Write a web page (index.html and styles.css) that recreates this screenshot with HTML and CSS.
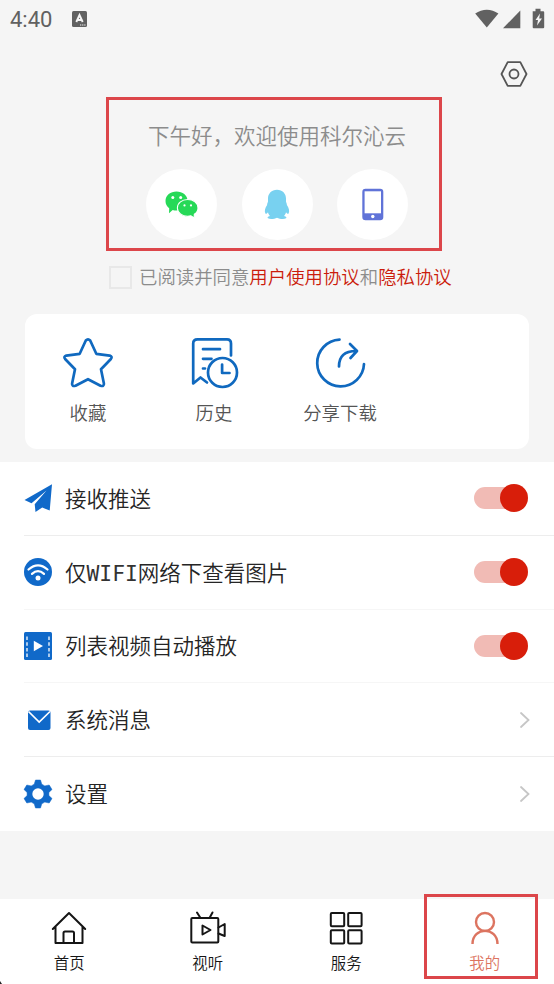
FILE: index.html
```html
<!DOCTYPE html>
<html lang="zh-CN">
<head>
<meta charset="utf-8">
<title>我的</title>
<link rel="stylesheet" href="styles.css">
</head>
<body>
<div class="screen">
  <header class="status">
    <span class="time">4:40</span>
    <svg class="ime" width="15" height="16" viewBox="0 0 15 16"><rect width="15" height="16" rx="1.5" fill="#616161"/><path d="M4.300 11 7.500 4 10.700 11M5.500 9h4" fill="none" stroke="#f5f5f5" stroke-width="1.9"/><path d="M8 14h5.500" stroke="#f5f5f5" stroke-width="1.200" stroke-dasharray="1.300 .8"/></svg>
    <svg class="signals" width="70" height="21" viewBox="0 0 70 21" fill="#616161"><path d="M.2 4.500C7.300-.6 16.300-.6 23.400 4.500L11.800 18.600Z"/><path d="M28 19.300 45.300 1.500V19.300Z"/><path d="M58 2.200h2.500V-.2h5v2.400h2.700q1 0 1 1v15.100q0 1-1 1H58.700q-1 0-1-1V2.200Z"/><path d="M65 4.500 60.500 11H63L62 16.500 67 9.500H64.200Z" fill="#f5f5f5"/></svg>
  </header>
  <div class="tools">
    <svg width="28" height="26" viewBox="0 0 28 26" fill="none" stroke="#555" stroke-width="1.8" stroke-linejoin="round"><path d="M7.700 1.200H20.300L26.500 13 20.300 24.800H7.700L1.500 13Z"/><circle cx="14" cy="13" r="4.500"/></svg>
  </div>
  <section class="login">
    <p class="greeting">下午好，欢迎使用科尔沁云</p>
    <div class="providers">
      <span class="provider"><svg width="34" height="28" viewBox="0 0 34 28"><path d="M11.500.5C17.500.5 22.600 4.300 22.600 10S17.500 19.500 11.500 19.500Q9.500 19.500 7.700 19L4 22.300 4.200 17.200C1.800 15.500.5 13 .5 10 .5 4.300 5.500.5 11.500.5Z" fill="#26d957"/><path d="M22.600 8.500c5.700 0 10.400 3.500 10.400 8.400 0 2.700-1.500 4.900-3.700 6.300L29.200 27l-3.300-2.200q-1.600.4-3.300.4c-5.500 0-10.200-3.500-10.200-8.300s4.600-8.400 10.200-8.400Z" fill="#26d957" stroke="#fff" stroke-width="1.100"/><g fill="#fff"><circle cx="7.800" cy="6.500" r="1.500"/><circle cx="15.700" cy="6.500" r="1.500"/><circle cx="19.500" cy="14.400" r="1.100"/><circle cx="26" cy="14.400" r="1.100"/></g></svg></span>
      <span class="provider"><svg width="26" height="31" viewBox="0 0 26 31"><path d="M13 .8C18.500.8 22 4.800 22 9.500V12.500C22.300 14 23 14.800 22.900 16 25 19 25.700 22 24.700 24.300 24 25.500 22.700 24.300 22 23.200 21.700 24.800 20.900 26 20 26.900 22.500 27.600 23 28.500 22 29.300 20 30.700 15.500 30 13 28.700 10.500 30 6 30.700 4 29.300 3 28.500 3.500 27.600 6 26.900 5.100 26 4.300 24.800 4 23.200 3.300 24.300 2 25.500 1.300 24.300.3 22 1 19 3.100 16 3 14.800 3.700 14 4 12.500V9.500C4 4.800 7.500.8 13 .8Z" fill="#78d1f0"/></svg></span>
      <span class="provider"><svg width="22" height="33" viewBox="0 0 22 33"><rect x=".3" y=".8" width="21" height="31.500" rx="3.200" fill="#6073d8"/><rect x="2.600" y="3.300" width="16.400" height="22" fill="#fff"/><circle cx="10.800" cy="28.500" r="1.700" fill="#fff"/></svg></span>
    </div>
  </section>
  <div class="agreement"><i class="checkbox"></i><span>已阅读并同意<b>用户使用协议</b>和<b>隐私协议</b></span></div>
  <section class="card">
    <div class="shortcut"><svg width="50" height="50" viewBox="0 0 50 50"><path d="M22.800 2.500Q25 .2 27.200 2.500L33.300 15.800 46.700 17.600Q49.800 18.700 47.900 21L38 31.200 40.900 45.400Q41.300 48.900 37.500 47.700L25 41.200 12.500 47.700Q8.700 48.900 9.100 45.400L12 31.200 2.100 21Q.2 18.700 3.300 17.600L16.700 15.800Z"/></svg><span>收藏</span></div>
    <div class="shortcut"><svg width="50" height="50" viewBox="0 0 50 50"><path d="M42 17.500V5.500Q42 1.300 38 1.300H8.500Q4.200 1.300 4.200 5.500V45.500L11.500 39.500 18 44.500M14 11.200H31M14 20.800H22.500M14 30.500H16"/><circle cx="33.500" cy="34.500" r="14.500"/><path d="M33.100 26.500V35H40.500"/></svg><span>历史</span></div>
    <div class="shortcut"><svg width="50" height="50" viewBox="0 0 50 50"><path d="M24.500 1.600A23.400 23.400 0 1 0 49 26M24 28.500C24 18.500 29.500 13 41 13M35 6 42 13 35.500 20"/></svg><span>分享下载</span></div>
  </section>
  <section class="list">
    <div class="row"><svg class="icon" width="28" height="28" viewBox="0 0 28 28" fill="#1069c9"><path d="M28 .2 25.700 26.600 18.200 23.500 11.500 28 10.700 20.200 22.500 6.500 7.500 19.200.5 16Z"/></svg><span class="label">接收推送</span><i class="switch"></i></div>
    <div class="row faint"><svg class="icon" width="28" height="28" viewBox="0 0 28 28"><circle cx="14" cy="14" r="14" fill="#1069c9"/><path d="M4.500 11.500Q14 3.200 23.500 11.500M8 15.900Q14 10.300 20 15.900" fill="none" stroke="#fff" stroke-width="2.200" stroke-linecap="round"/><circle cx="14" cy="20" r="2.500" fill="#fff"/></svg><span class="label">仅<span class="latin">WIFI</span>网络下查看图片</span><i class="switch"></i></div>
    <div class="row faint"><svg class="icon" width="28" height="28" viewBox="0 0 28 28"><rect width="28" height="28" rx="1.500" fill="#1069c9"/><path d="M3 4.500V25M25 4.500V25" stroke="#fff" stroke-width="1.300" stroke-dasharray="3.500 2.200"/><path d="M9.800 8.700 19 14 9.800 19.300Z" fill="#fff"/></svg><span class="label">列表视频自动播放</span><i class="switch"></i></div>
    <div class="row"><svg class="icon" width="28" height="28" viewBox="0 0 28 28"><rect x="4" y="4.500" width="22.500" height="19.500" rx="2" fill="#1069c9"/><path d="M4.500 5.500 15.200 16 26 5.500" fill="none" stroke="#fff" stroke-width="1.700"/></svg><span class="label">系统消息</span><svg class="arrow" width="10" height="16" viewBox="0 0 10 16"><path d="M1 1 8.500 8 1 15"/></svg></div>
    <div class="row"><svg class="icon" width="28" height="28" viewBox="0 0 28 28"><path d="M11.500 0H16.500L17.800 4.200 20.800 5.900 25.200 5 28 9.500 24.900 12.400V15.600L28 18.500 25.200 23 20.800 22.100 17.800 23.800 16.500 28H11.500L10.200 23.800 7.200 22.100 2.800 23 0 18.500 3.100 15.600V12.400L0 9.500 2.800 5 7.200 5.900 10.200 4.200Z" fill="#1069c9" stroke="#1069c9" stroke-width=".5" stroke-linejoin="round"/><circle cx="14" cy="14" r="5.700" fill="#fff"/></svg><span class="label">设置</span><svg class="arrow" width="10" height="16" viewBox="0 0 10 16"><path d="M1 1 8.500 8 1 15"/></svg></div>
  </section>
  <nav class="tabs">
    <div class="tab"><svg width="36" height="36" viewBox="0 0 36 36"><path d="M1.800 20 18 4 34.200 20M4.500 17.500V34H31.500V17.500M12.500 34V24Q12.500 22.500 14 22.500H21.500Q23 22.500 23 24V34"/></svg><span>首页</span></div>
    <div class="tab"><svg width="36" height="36" viewBox="0 0 36 36"><rect x="1.300" y="9" width="27" height="24.500" rx="1"/><path d="M7 3.500 10.500 9M22.500 3.500 19.500 9M12.500 16.500V25.500L20.500 21ZM28.500 18.500 34.700 15V27L28.500 24.500"/></svg><span>视听</span></div>
    <div class="tab"><svg width="36" height="36" viewBox="0 0 36 36"><rect x="2.800" y="4" width="13.400" height="13.200" rx="1"/><rect x="20.200" y="4" width="13.400" height="13.200" rx="1"/><rect x="2.800" y="21.300" width="13.400" height="13.200" rx="1"/><rect x="20.200" y="21.300" width="13.400" height="13.200" rx="1"/></svg><span>服务</span></div>
    <div class="tab active"><svg width="36" height="36" viewBox="0 0 36 36"><circle cx="18" cy="13" r="9"/><path d="M5.500 35C5.500 17.500 30.500 17.500 30.500 35"/></svg><span>我的</span></div>
    <i class="tab-outline"></i>
    <svg class="corner" width="3" height="3" viewBox="0 0 3 3"><path d="M0 0 2 3H0Z"/></svg>
  </nav>
</div>
</body>
</html>
```
FILE: styles.css
```css
* { box-sizing: border-box; }
body { margin: 0; background: #f5f5f5; font-family: "Noto Sans CJK SC", sans-serif; font-weight: 350; }
svg { display: block; flex: none; overflow: visible; }
.screen { width: 554px; height: 984px; display: flex; flex-direction: column; overflow: hidden; }
.status { height: 38px; flex: none; display: flex; align-items: center; padding: 0 9px 1px 10px; color: #616161; }
.time { font: 400 22px/30px Roboto, sans-serif; width: 62px; padding-top: 2px; }
.signals { margin: 1px 0 0 auto; }
.tools { height: 59px; flex: none; padding: 23px 26px 0 0; display: flex; justify-content: flex-end; }
.login { width: 336px; height: 154px; flex: none; margin-left: 106px; border: 3px solid #dc464a; padding-top: 19px; }
.greeting { margin: 0 0 0 39px; font-size: 21.5px; line-height: 32px; color: #8c8c8c; white-space: nowrap; }
.providers { display: flex; gap: 24.5px; margin: 18px 0 0 37px; }
.provider { width: 71px; height: 71px; border-radius: 50%; background: #fff; display: flex; align-items: center; justify-content: center; }
.agreement { height: 63px; flex: none; display: flex; align-items: center; padding: 0 0 10px 109px; gap: 7px; font-size: 18.4px; line-height: 28px; color: #8c8c8c; white-space: nowrap; }
.agreement span { margin-top: -4px; }
.agreement b { font-weight: inherit; color: #cb1c0c; }
.checkbox { width: 23px; height: 23px; border: 2px solid #e8e8e8; }
.card { height: 135px; flex: none; margin: 0 25px 13px; background: #fff; border-radius: 12px; display: grid; grid-template-columns: repeat(4, 1fr); padding-top: 24px; }
.shortcut { display: flex; flex-direction: column; align-items: center; gap: 11px; font-size: 18.4px; line-height: 27px; color: #555; }
.shortcut svg { fill: none; stroke: #1069bf; stroke-width: 2.7; stroke-linecap: round; stroke-linejoin: round; }
.list { height: 369px; flex: none; background: #fff; padding-left: 24px; display: grid; grid-template-rows: repeat(5, 1fr); }
.row { display: flex; align-items: center; padding-right: 25px; border-bottom: 1px solid #ededed; }
.row.faint { border-bottom-color: #f6f6f6; }
.row:last-child { border-bottom-color: transparent; }
.label { margin-left: 13px; padding-bottom: 1px; font-size: 21.5px; line-height: 32px; color: #252525; }
.latin { font-family: "DejaVu Sans Mono", monospace; font-size: 21.3px; line-height: 1; color: #333; }
.switch { margin: 0 1px 0 auto; width: 54px; height: 28px; display: flex; align-items: center; }
.switch::before { content: ""; width: 41px; height: 22px; flex: none; margin-right: -15px; border-radius: 11px 0 0 11px; background: #f1bbb5; }
.switch::after { content: ""; width: 28px; height: 28px; flex: none; border-radius: 50%; background: #d81e0a; }
.arrow { margin: 0 -1px 0 auto; fill: none; stroke: #c6c6c6; stroke-width: 1.8; stroke-linecap: round; }
.tabs { height: 85px; flex: none; margin-top: auto; background: #fff; display: grid; grid-template-columns: repeat(4, 1fr); position: relative; }
.tab { display: flex; flex-direction: column; align-items: center; padding-top: 10px; gap: 6px; font-size: 15.4px; line-height: 23px; color: #151515; }
.tab svg { fill: none; stroke: currentColor; stroke-width: 2; stroke-linejoin: round; stroke-linecap: round; }
.tab.active { color: #dc7460; }
.tab.active svg { stroke-width: 2.4; stroke-linecap: butt; }
.tab-outline { position: absolute; left: 424px; top: -5px; width: 114px; height: 85px; border: 3px solid #dc464a; }
.corner { position: absolute; left: 0; bottom: 0; fill: #222; }
```
